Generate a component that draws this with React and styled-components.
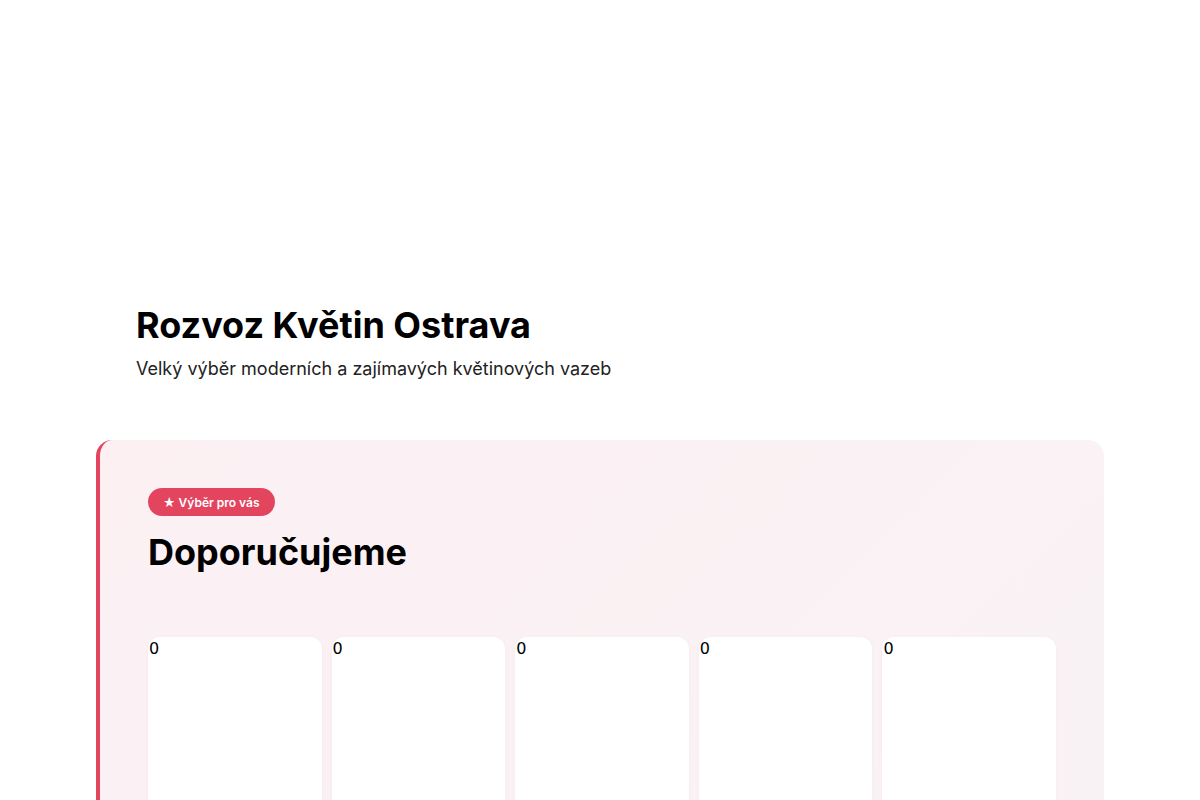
import React from 'react';
import styled, {createGlobalStyle} from 'styled-components';

const GlobalStyle = createGlobalStyle`
body{
margin: 0;
background: #ffffff;
font-family: Inter, "Noto Sans", sans-serif;
color: #000000;
}
`;

const Page = styled.main`
max-width: 1008px;
margin: 0 auto;
padding-top: 300px;
`;
const Hero = styled.header`
padding: 0 40px;
h1{
margin: 0;
font-size: 36px;
line-height: 50px;
font-weight: 700;
}
p{
margin: 5px 0 0;
font-size: 18px;
line-height: 28px;
color: #222222;
}
`;
const Featured = styled.section`
margin-top: 57px;
border-left: 4px solid #e3455f;
border-radius: 16px;
background: linear-gradient(135deg, #fcf0f3 0%, #f9f3f5 100%);
padding: 48px 48px 0;
min-height: 400px;
`;
const Badge = styled.span`
display: inline-flex;
align-items: center;
height: 28px;
padding: 0 15px;
border-radius: 14px;
background: #e3455f;
color: #ffffff;
font-size: 12px;
font-weight: 600;
`;
const Heading = styled.h2`
margin: 12px 0 0;
font-size: 36px;
line-height: 48px;
font-weight: 700;
`;
const Grid = styled.div`
display: grid;
grid-template-columns: repeat(5, 1fr);
gap: 10px;
margin-top: 61px;
`;
const Card = styled.div`
height: 240px;
background: #ffffff;
border-radius: 12px;
box-shadow: 0 1px 4px rgba(120,60,80,.04);
font-family: "DejaVu Sans", sans-serif;
font-size: 16px;
line-height: 24px;
padding-left: 1px;
`;

const products = [0, 0, 0, 0, 0];

export default function App() {
    return (
        <>
            <GlobalStyle/>
            <Page>
                <Hero>
                    <h1>Rozvoz Květin Ostrava</h1>
                    <p>Velký výběr moderních a zajímavých květinových vazeb</p>
                </Hero>
                <Featured>
                    <Badge>★ Výběr pro vás</Badge>
                    <Heading>Doporučujeme</Heading>
                    <Grid>
                        {products.map((count, i) => (
                            <Card key={i}>{count}</Card>
                        ))}
                    </Grid>
                </Featured>
            </Page>
        </>
    );
}
